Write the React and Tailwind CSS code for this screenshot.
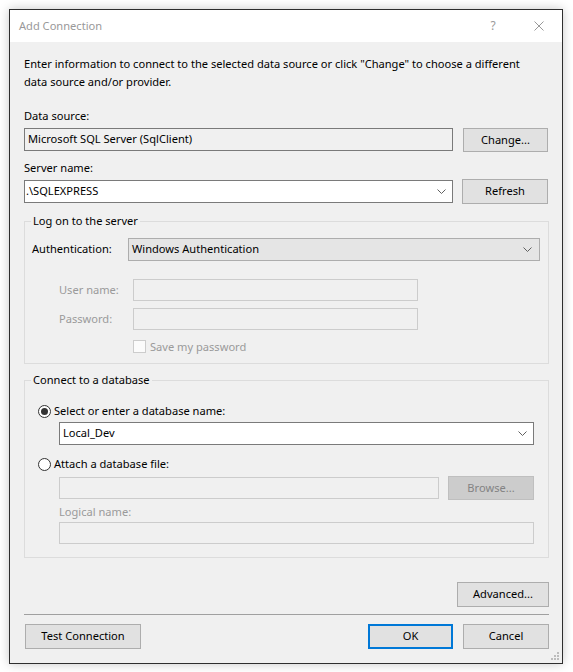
import React from "react";

const FONT = { fontFamily: '"Noto Sans", "Open Sans", sans-serif' };

function Chevron() {
  return (
    <svg width="9" height="6" viewBox="0 0 9 6" className="shrink-0">
      <polyline points="0.5,0.5 4.5,4.5 8.5,0.5" fill="none" stroke="#606060" strokeWidth="1" />
    </svg>
  );
}

function Btn({ children, className = "", disabled = false }) {
  return (
    <div
      className={
        "flex items-center justify-center border " +
        (disabled
          ? "border-[#bfbfbf] bg-[#cccccc] text-[#838383] "
          : "border-[#adadad] bg-[#e1e1e1] text-black ") +
        className
      }
    >
      {children}
    </div>
  );
}

function Radio({ checked }) {
  return (
    <div className="flex h-[13px] w-[13px] shrink-0 items-center justify-center rounded-full border border-[#333333] bg-white">
      {checked && <div className="h-[7px] w-[7px] rounded-full bg-[#333333]" />}
    </div>
  );
}

function DisabledInput({ className = "" }) {
  return <div className={"h-[22px] border border-[#cccccc] bg-[#f0f0f0] " + className} />;
}

export default function App() {
  return (
    <div className="h-[672px] w-[573px] bg-white pl-[9px] pt-[9px] text-[11.1px] text-black" style={FONT}>
      <div className="relative flex h-[655px] w-[554px] flex-col border border-[#2e2e2e] shadow-[0_0_10px_rgba(0,0,0,0.22)]">
        {/* Title bar */}
        <div className="flex h-[32px] items-center bg-white">
          <div className="flex-1 pl-[9px] pt-[1px] text-[#999999]">Add Connection</div>
          <div className="flex h-[32px] w-[46px] items-center justify-center text-[12px] text-[#9a9a9a]">?</div>
          <div className="flex h-[32px] w-[46px] items-center justify-center">
            <svg width="10" height="10" viewBox="0 0 10 10">
              <path d="M0.5 0.5 L9.5 9.5 M9.5 0.5 L0.5 9.5" stroke="#999999" strokeWidth="1" />
            </svg>
          </div>
        </div>

        {/* Content */}
        <div className="flex flex-1 flex-col bg-[#f0f0f0] pl-[14px] pr-[13px]">
          <div className="mt-[13px] leading-[18px]">
            Enter information to connect to the selected data source or click "Change" to choose a different
            <br />
            data source and/or provider.
          </div>

          <div className="mt-[17px] leading-[16px]">Data source:</div>
          <div className="mt-[4px] flex items-start">
            <div className="flex h-[23px] w-[429px] items-center border border-[#7a7a7a] bg-[#f0f0f0] pl-[3px]">
              Microsoft SQL Server (SqlClient)
            </div>
            <Btn className="ml-[10px] h-[24px] w-[85px]">Change...</Btn>
          </div>

          <div className="mt-[8px] leading-[16px]">Server name:</div>
          <div className="mt-[3px] flex items-start">
            <div className="mt-[1px] flex h-[23px] w-[429px] items-center border border-[#7a7a7a] bg-white pl-[1px] pr-[6px]">
              <span className="flex-1">.\SQLEXPRESS</span>
              <Chevron />
            </div>
            <Btn className="ml-[9px] h-[25px] w-[86px]">Refresh</Btn>
          </div>

          {/* Group 1 */}
          <fieldset className="mt-[9px] border border-[#dcdcdc] pb-[10px]">
            <legend className="ml-[6px] px-[2px] leading-[16px]">Log on to the server</legend>
            <div className="mt-[9px] flex items-center pl-[7px] pr-[8px]">
              <div className="w-[96px]">Authentication:</div>
              <div className="flex h-[23px] flex-1 items-center border border-[#adadad] bg-[#e5e5e5] pl-[3px] pr-[7px]">
                <span className="flex-1">Windows Authentication</span>
                <Chevron />
              </div>
            </div>
            <div className="mt-[18px] flex items-center pl-[34px]">
              <div className="w-[74px] text-[#9a9a9a]">User name:</div>
              <DisabledInput className="w-[285px]" />
            </div>
            <div className="mt-[7px] flex items-center pl-[34px]">
              <div className="w-[74px] text-[#9a9a9a]">Password:</div>
              <DisabledInput className="w-[285px]" />
            </div>
            <div className="mt-[10px] flex items-center pl-[108px]">
              <div className="h-[13px] w-[13px] border border-[#cccccc] bg-[#fbfbfb]" />
              <span className="ml-[4px] leading-[13px] text-[#9a9a9a]">Save my password</span>
            </div>
          </fieldset>

          {/* Group 2 */}
          <fieldset className="mt-[8px] border border-[#dcdcdc] pb-[13px]">
            <legend className="ml-[6px] px-[2px] leading-[16px]">Connect to a database</legend>
            <div className="mt-[15px] flex items-center pl-[13px]">
              <Radio checked />
              <span className="ml-[3px] leading-[16px]">Select or enter a database name:</span>
            </div>
            <div className="ml-[34px] mr-[14px] mt-[3px] flex h-[23px] items-center border border-[#7a7a7a] bg-white pl-[3px] pr-[6px]">
              <span className="flex-1">Local_Dev</span>
              <Chevron />
            </div>
            <div className="mt-[11px] flex items-center pl-[13px]">
              <Radio />
              <span className="ml-[3px] leading-[16px]">Attach a database file:</span>
            </div>
            <div className="ml-[34px] mr-[14px] mt-[4px] flex items-start">
              <DisabledInput className="mt-[1px] w-[380px]" />
              <Btn disabled className="ml-[9px] h-[24px] flex-1">Browse...</Btn>
            </div>
            <div className="ml-[34px] mt-[4px] leading-[16px] text-[#9a9a9a]">Logical name:</div>
            <DisabledInput className="ml-[34px] mr-[14px] mt-[2px]" />
          </fieldset>

          <div className="mt-[24px] flex justify-end">
            <Btn className="h-[25px] w-[92px]">Advanced...</Btn>
          </div>

          <div className="mt-[7px] h-px bg-[#a0a0a0]" />

          <div className="mt-[9px] flex items-start">
            <Btn className="ml-[1px] h-[25px] w-[116px]">Test Connection</Btn>
            <div className="flex-1" />
            <div className="flex h-[25px] w-[85px] items-center justify-center border-2 border-[#0078d7] bg-[#e1e1e1]">OK</div>
            <Btn className="ml-[10px] h-[25px] w-[86px]">Cancel</Btn>
          </div>
        </div>

        {/* Resize grip */}
        <svg className="absolute bottom-[2px] right-[2px]" width="10" height="10" viewBox="0 0 10 10">
          <rect x="7" y="1" width="2" height="2" fill="#bcbcbc" />
          <rect x="4" y="4" width="2" height="2" fill="#bcbcbc" />
          <rect x="7" y="4" width="2" height="2" fill="#bcbcbc" />
          <rect x="1" y="7" width="2" height="2" fill="#bcbcbc" />
          <rect x="4" y="7" width="2" height="2" fill="#bcbcbc" />
          <rect x="7" y="7" width="2" height="2" fill="#bcbcbc" />
        </svg>
      </div>
    </div>
  );
}
